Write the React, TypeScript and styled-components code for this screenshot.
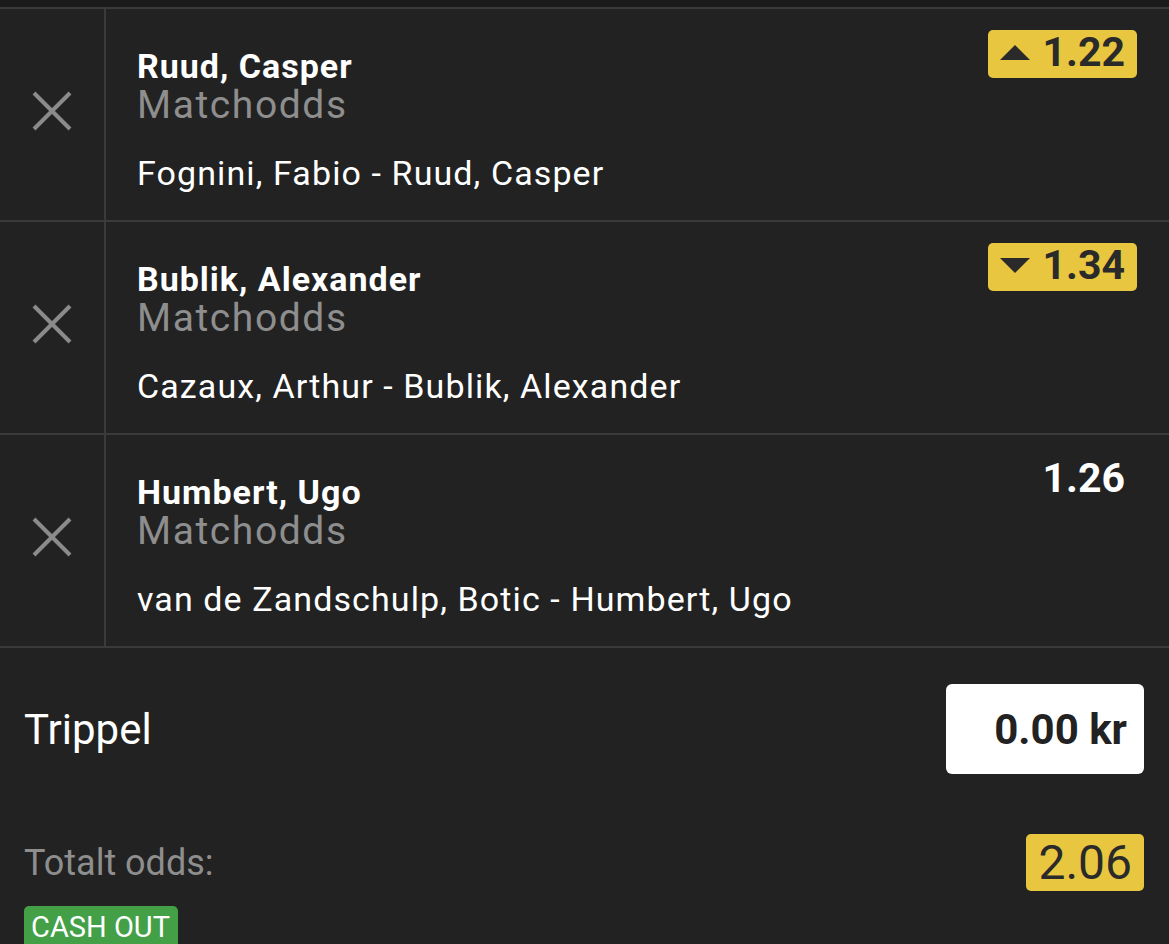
import React from 'react'
import styled, { createGlobalStyle } from 'styled-components'

const GlobalStyle = createGlobalStyle`
  html, body {
    margin: 0;
    padding: 0;
    background: #222222;
    overflow: hidden;
  }
  body {
    font-family: Roboto, 'Noto Sans', sans-serif;
    color: #ffffff;
  }
`

const selections = [
  { id: 1, name: 'Ruud, Casper', market: 'Matchodds', event: 'Fognini, Fabio - Ruud, Casper', odds: '1.22', trend: 'up' },
  { id: 2, name: 'Bublik, Alexander', market: 'Matchodds', event: 'Cazaux, Arthur - Bublik, Alexander', odds: '1.34', trend: 'down' },
  { id: 3, name: 'Humbert, Ugo', market: 'Matchodds', event: 'van de Zandschulp, Botic - Humbert, Ugo', odds: '1.26', trend: null },
]

function CloseIcon() {
  return (
    <svg width='40' height='40' viewBox='0 0 40 40'>
      <path d='M2 2 L38 38 M38 2 L2 38' stroke='#8b8b8b' strokeWidth='4' fill='none' />
    </svg>
  )
}

function Trend({ dir }: { dir: string }) {
  //* little triangle in front of changed odds
  return (
    <svg width='30' height='15' viewBox='0 0 30 15'>
      {dir === 'up'
        ? <polygon points='15,0 30,15 0,15' fill='#2a2a2a' />
        : <polygon points='0,0 30,0 15,15' fill='#2a2a2a' />}
    </svg>
  )
}

export default function App() {
  return (
    <>
      <GlobalStyle />
      <Page>
        <TopStrip />
        <List>
          {selections.map((sel) => {
            return (
              <Row key={sel.id}>
                <RemoveCell>
                  <CloseIcon />
                </RemoveCell>
                <Content>
                  <Info>
                    <Name>{sel.name}</Name>
                    <Market>{sel.market}</Market>
                    <Event>{sel.event}</Event>
                  </Info>
                  <Odds changed={!!sel.trend}>
                    {sel.trend && <Trend dir={sel.trend} />}
                    {sel.odds}
                  </Odds>
                </Content>
              </Row>
            )
          })}
        </List>

        <Summary>
          <StakeRow>
            <StakeLabel>Trippel</StakeLabel>
            <StakeInput>0.00 kr</StakeInput>
          </StakeRow>
          <TotalRow>
            <TotalLabel>Totalt odds:</TotalLabel>
            <TotalOdds>2.06</TotalOdds>
          </TotalRow>
          <CashOut>CASH OUT</CashOut>
        </Summary>
      </Page>
    </>
  )
}

const Page = styled.div`
  width: 1169px;
  height: 944px;
  overflow: hidden;
  background: #222222;
`
const TopStrip = styled.div`
  height: 7px;
  background: #1b1b1b;
`
const List = styled.div`
  display: flex;
  flex-direction: column;
  border-top: 2px solid #3a3a3a;
`
const Row = styled.div`
  display: flex;
  height: 211px;
  border-bottom: 2px solid #3a3a3a;
`
const RemoveCell = styled.div`
  width: 106px;
  flex-shrink: 0;
  border-right: 2px solid #3a3a3a;
  display: flex;
  align-items: center;
  justify-content: center;
  padding-bottom: 7px;
  box-sizing: border-box;
`
const Content = styled.div`
  flex: 1;
  display: flex;
  justify-content: space-between;
  align-items: flex-start;
  padding: 21px 32px 0 31px;
`
const Info = styled.div`
  display: flex;
  flex-direction: column;
  margin-top: 17px;
`
const Name = styled.div`
  font-size: 34px;
  line-height: 38px;
  letter-spacing: 1px;
  font-weight: 700;
  color: #ffffff;
`
const Market = styled.div`
  font-size: 39px;
  line-height: 40px;
  letter-spacing: 1.6px;
  color: #8e8e8e;
`
const Event = styled.div`
  margin-top: 29px;
  font-size: 34px;
  line-height: 38px;
  letter-spacing: 1.1px;
  color: #ffffff;
`
const Odds = styled.div<{ changed: boolean }>`
  display: flex;
  align-items: center;
  gap: 13px;
  height: 48px;
  padding: 0 12px 3px 12px;
  border-radius: 5px;
  font-size: 41px;
  font-weight: 700;
  line-height: 1;
  box-sizing: border-box;
  background: ${props => props.changed ? '#e9c63f' : 'transparent'};
  color: ${props => props.changed ? '#2a2a2a' : '#ffffff'};
`

const Summary = styled.section`
  display: flex;
  flex-direction: column;
  padding: 36px 25px 0 24px;
`
const StakeRow = styled.div`
  display: flex;
  align-items: center;
  justify-content: space-between;
`
const StakeLabel = styled.span`
  font-size: 42px;
  color: #ffffff;
`
const StakeInput = styled.div`
  width: 198px;
  height: 90px;
  box-sizing: border-box;
  background: #ffffff;
  border-radius: 6px;
  display: flex;
  align-items: center;
  justify-content: flex-end;
  padding-right: 17px;
  font-size: 42px;
  font-weight: 700;
  color: #222222;
`
const TotalRow = styled.div`
  display: flex;
  align-items: center;
  justify-content: space-between;
  margin-top: 60px;
`
const TotalLabel = styled.span`
  font-size: 36px;
  color: #8e8e8e;
`
const TotalOdds = styled.div`
  height: 57px;
  box-sizing: border-box;
  padding: 0 12px;
  background: #e9c63f;
  border-radius: 5px;
  display: flex;
  align-items: center;
  font-size: 48px;
  line-height: 1;
  color: #2a2a2a;
`
const CashOut = styled.div`
  align-self: flex-start;
  margin-top: 15px;
  padding: 2px 8px 6px 7px;
  background: #43a047;
  border-radius: 5px;
  font-size: 29px;
  line-height: 38px;
  color: #ffffff;
`
